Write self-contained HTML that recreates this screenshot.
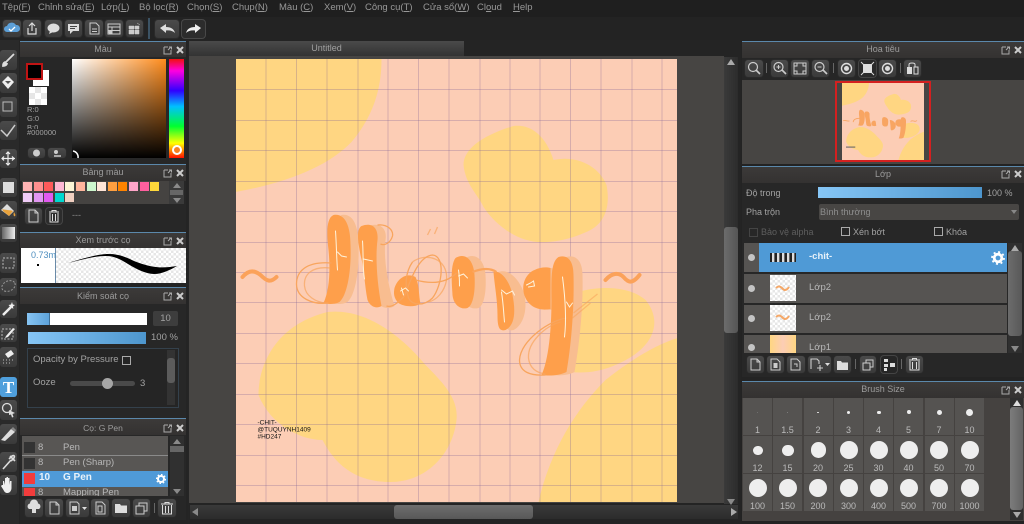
<!DOCTYPE html>
<html lang="vi">
<head>
<meta charset="utf-8">
<title>MediBang Paint</title>
<style>
html,body{margin:0;padding:0;width:1024px;height:524px;overflow:hidden;background:#252525}
body{position:relative;font-family:"Liberation Sans","Noto Sans CJK SC",sans-serif;color:#a2a2a2;filter:blur(.35px)}
.a,.t,.b,.title,.c,.pl,.sw,.bs{position:absolute}
.t{white-space:nowrap;font-size:9px;line-height:10px}
.t u{text-decoration:underline}
.m{color:#989898;font-size:9.5px;top:3px}
.b{background:linear-gradient(#4a4a4a,#3a3a3a);border-radius:3px;box-shadow:0 0 0 1px #2a2a2a}
.b svg,.title svg{position:absolute;left:0;top:0}
.title{background:linear-gradient(#3c3a39,#343231);border-top:1px solid #5b88ab;height:15px;text-align:center;font-size:9px;line-height:15px;color:#9c9c9c}
.c{background:#272727}
.sw{height:9px;width:9px;top:182px}
.ck2{background:repeating-conic-gradient(#e6e6e6 0 25%,#fff 0 50%) 0 0/5px 5px}
.pl{left:22px;width:146px;background:#585654;border-bottom:1px solid #8a8a8a;height:15px;color:#b8b8b8;font-size:9.5px;line-height:15px}
.bs{width:29px;height:37px;background:#555351}
.bs i{position:absolute;background:#eee;border-radius:50%}
.bs span{position:absolute;left:0;width:100%;top:27px;text-align:center;font-size:9px;line-height:10px;color:#bbb}
.ly{position:absolute;left:744px;width:263px;background:#565452;color:#b8b8b8;font-size:9.5px}
.cb{position:absolute;width:7px;height:7px;border:1px solid #aaa}
</style>
</head>
<body>

<!-- menu -->
<div class="a" style="left:0;top:0;width:1024px;height:17px;background:#1f1f1f"></div>
<span class="t m" style="left:2px">Tệp(<u>F</u>)</span>
<span class="t m" style="left:38px">Chỉnh sửa(<u>E</u>)</span>
<span class="t m" style="left:101px">Lớp(<u>L</u>)</span>
<span class="t m" style="left:139px">Bộ lọc(<u>R</u>)</span>
<span class="t m" style="left:187px">Chọn(<u>S</u>)</span>
<span class="t m" style="left:232px">Chụp(<u>N</u>)</span>
<span class="t m" style="left:279px">Màu (<u>C</u>)</span>
<span class="t m" style="left:324px">Xem(<u>V</u>)</span>
<span class="t m" style="left:365px">Công cụ(<u>T</u>)</span>
<span class="t m" style="left:423px">Cửa sổ(<u>W</u>)</span>
<span class="t m" style="left:477px">Cl<u>o</u>ud</span>
<span class="t m" style="left:513px"><u>H</u>elp</span>

<!-- toolbar -->
<div class="a" style="left:0;top:17px;width:1024px;height:23px;background:#232323"></div>
<div class="b" style="left:3px;top:20px;width:18px;height:17px"><svg width="18" height="17"><path d="M4 12a3 3 0 0 1 0-6 5 5 0 0 1 9-1 3.500 3.500 0 0 1 1 7z" fill="#5da0d8"/><path d="M6 9l2 2 4-4" stroke="#fff" fill="none" stroke-width="1.300"/></svg></div>
<div class="b" style="left:23px;top:20px;width:18px;height:17px"><svg width="18" height="17"><path d="M5 8v6h8V8M9 11V3M6 6l3-3 3 3" stroke="#ddd" fill="none" stroke-width="1.200"/></svg></div>
<div class="b" style="left:45px;top:20px;width:17px;height:17px"><svg width="17" height="17"><ellipse cx="8.500" cy="8" rx="6" ry="4.500" fill="#ddd"/><path d="M5 11l-1 3 4-2z" fill="#ddd"/></svg></div>
<div class="b" style="left:65px;top:20px;width:17px;height:17px"><svg width="17" height="17"><path d="M3 4h11v7H8l-3 3v-3H3z" fill="#ddd"/><path d="M5 6.500h7M5 8.500h5" stroke="#444"/></svg></div>
<div class="b" style="left:85px;top:20px;width:18px;height:17px"><svg width="18" height="17"><path d="M5 3h6l3 3v8H5zM7 9h5M7 11.500h5" stroke="#ccc" fill="none"/></svg></div>
<div class="b" style="left:105px;top:20px;width:18px;height:17px"><svg width="18" height="17"><path d="M3 4h12v10H3zM3 7h12M3 10.500h12M7 7v7" stroke="#ccc" fill="none"/><circle cx="5.500" cy="12" r="2" fill="#ccc"/></svg></div>
<div class="b" style="left:126px;top:20px;width:17px;height:17px"><svg width="17" height="17"><path d="M3 6h5v3H3zM9 6h4v3H9zM3 10h5v4H3zM9 10h4v4H9zM11 3l3 2" fill="#ccc" stroke="#ccc" stroke-width=".500"/></svg></div>
<div class="a" style="left:148px;top:18px;width:2px;height:21px;background:#3c5364"></div>
<div class="b" style="left:155px;top:20px;width:24px;height:18px"><svg width="24" height="18"><path d="M5 8l6-4v3c5 0 8 2 9 6-2-2-5-3-9-2.500V13z" fill="#ddd"/></svg></div>
<div class="b" style="left:182px;top:20px;width:23px;height:18px;background:#2c2c2c;box-shadow:0 0 0 1px #484848"><svg width="23" height="18"><path d="M19 8l-6-4v3C8 7 5 9 4 13c2-2 5-3 9-2.500V13z" fill="#eee"/></svg></div>

<!-- left tool strip -->
<div class="a" style="left:0;top:40px;width:19px;height:484px;background:#2a2a2a"></div>
<div class="b" style="left:0;top:50px;width:17px;height:20px"><svg width="17" height="20"><path d="M14 4L6 12M6 12c-2 0-3 1-3 4 2 0 4-1 4-3" stroke="#ddd" stroke-width="1.800" fill="#ddd"/></svg></div>
<div class="b" style="left:0;top:73px;width:17px;height:20px"><svg width="17" height="20"><path d="M8 3l6 6-6 7-6-7z" fill="#eee"/><path d="M5 8h6l-3 3z" fill="#555"/></svg></div>
<div class="b" style="left:0;top:97px;width:17px;height:20px"><svg width="17" height="20"><rect x="3" y="5" width="9" height="9" fill="none" stroke="#bbb"/></svg></div>
<div class="b" style="left:0;top:121px;width:17px;height:19px"><svg width="17" height="19"><path d="M1 9l6 6 8-11" stroke="#ccc" stroke-width="1.500" fill="none"/></svg></div>
<div class="b" style="left:0;top:149px;width:17px;height:19px"><svg width="17" height="19"><path d="M8 3v13M2 9.500h13M6 5l2-2 2 2M6 14l2 2 2-2M4 7.500l-2 2 2 2M12 7.500l2 2-2 2" stroke="#eee" stroke-width="1.200" fill="none"/></svg></div>
<div class="b" style="left:0;top:178px;width:17px;height:19px"><svg width="17" height="19"><rect x="3" y="4" width="11" height="11" fill="#ddd"/></svg></div>
<div class="b" style="left:0;top:201px;width:17px;height:18px"><svg width="17" height="18"><path d="M1 9l6-6 7 7-5 5z" fill="#ddd"/><path d="M14 11c1 2 2 3 1 4s-2-1-1-4z" fill="#e8a23c"/><path d="M2 8c2 1 9 1 11 2l-4 5-6-5z" fill="#e8a23c"/></svg></div>
<div class="b" style="left:0;top:224px;width:17px;height:18px"><div class="a" style="left:2px;top:3px;width:13px;height:12px;background:linear-gradient(90deg,#666,#eee)"></div></div>
<div class="b" style="left:0;top:253px;width:17px;height:20px"><svg width="17" height="20"><rect x="3" y="5" width="11" height="10" fill="none" stroke="#bbb" stroke-dasharray="2 1.500"/></svg></div>
<div class="b" style="left:0;top:278px;width:17px;height:18px"><svg width="17" height="18"><ellipse cx="8.500" cy="8" rx="7" ry="5" fill="none" stroke="#999" stroke-dasharray="2 1.500" transform="rotate(-25 8.500 8)"/></svg></div>
<div class="b" style="left:0;top:300px;width:17px;height:18px"><svg width="17" height="18"><path d="M3 15L11 7" stroke="#eee" stroke-width="2.500"/><path d="M12 2l.8 2.500L15 5l-2 1.500.3 2.500-1.800-1.500L9.500 9l.5-2.500L8.500 5l2.500-.5z" fill="#eee"/></svg></div>
<div class="b" style="left:0;top:324px;width:17px;height:18px"><svg width="17" height="18"><rect x="2" y="5" width="11" height="10" fill="none" stroke="#bbb" stroke-dasharray="2 1.500"/><path d="M6 12l7-8 2 1-7 8-3 1z" fill="#eee"/></svg></div>
<div class="b" style="left:0;top:347px;width:17px;height:20px"><svg width="17" height="20"><path d="M5 7l6-4 3 4-6 4z" fill="#eee"/><path d="M3 13h1M6 13h1M9 13h1M12 13h1M3 16h1M6 16h1M9 16h1" stroke="#bbb"/></svg></div>
<div class="b" style="left:0;top:377px;width:17px;height:20px;background:#4f9fdc"><span class="t" style="left:0;width:17px;text-align:center;top:2px;font:bold 17px/17px 'Liberation Serif',serif;color:#fff">T</span></div>
<div class="b" style="left:0;top:400px;width:17px;height:20px"><svg width="17" height="20"><circle cx="7" cy="8" r="4.500" fill="none" stroke="#ddd" stroke-width="1.300"/><path d="M9 10l6 3-2.500 1 1 3-1.500.5-1-3L9 15z" fill="#ddd"/></svg></div>
<div class="b" style="left:0;top:424px;width:17px;height:20px"><svg width="17" height="20"><path d="M1 16L11 5l4 3-10 9z" fill="#ddd"/><path d="M11 5l2-2 3 3-1 2z" fill="#888"/></svg></div>
<div class="b" style="left:0;top:452px;width:17px;height:20px"><svg width="17" height="20"><path d="M3 17L11 8M10 4l5 5M9 7l3-3c2-1 3 0 2 2l-3 3" stroke="#ddd" stroke-width="1.600" fill="none"/></svg></div>
<div class="b" style="left:0;top:475px;width:17px;height:20px"><svg width="17" height="20"><path d="M3 10V6l1 0 1 4V3h1.500v6V2H8v7V3h1.500v7l.5-4h1.500v7c0 3-2 5-4 5s-3-1-4-3L1 11l1-1z" fill="#eee"/></svg></div>

<!-- Left panels -->
<div class="a" style="left:19px;top:40px;width:169px;height:484px;background:#242424"></div>

<!-- Color -->
<div class="c" style="left:20px;top:56px;width:166px;height:108px"></div>
<div class="title" style="left:20px;top:41px;width:166px">Màu</div>
<svg class="a" style="left:162px;top:45px" width="24" height="10"><path d="M2 2h4M2 2v7h7V5M6 5l3-3M7 2h2.500v2.500" stroke="#aaa" fill="none"/><path d="M15 2l6 6M21 2l-6 6" stroke="#ccc" stroke-width="2"/></svg>
<div class="a" style="left:33px;top:70px;width:16px;height:16px;background:#fff"></div>
<div class="a" style="left:26px;top:63px;width:13px;height:13px;background:#000;border:2px solid #c01414"></div>
<div class="a ck2" style="left:29px;top:87px;width:18px;height:18px;background-size:12px 12px"></div>
<span class="t" style="left:27px;top:105px;font-size:7.5px">R:0</span>
<span class="t" style="left:27px;top:114px;font-size:7.5px">G:0</span>
<div class="a" style="left:27px;top:123px;height:6px;width:30px;overflow:hidden"><span class="t" style="left:0;top:0;font-size:7.5px">B:0</span></div>
<span class="t" style="left:27px;top:128px;font-size:7.5px">#000000</span>
<div class="b" style="left:28px;top:148px;width:17px;height:10px"><svg width="17" height="10"><circle cx="8.500" cy="5" r="3.500" fill="#ccc"/></svg></div>
<div class="b" style="left:48px;top:148px;width:18px;height:10px"><svg width="18" height="10"><circle cx="8" cy="4" r="2" fill="#ccc"/><path d="M6 8h7" stroke="#ccc" stroke-width="1.500"/></svg></div>
<div class="a" style="left:72px;top:59px;width:94px;height:99px;background:linear-gradient(rgba(0,0,0,0),#000),linear-gradient(90deg,#fff,#ff8c1c)"></div>
<svg class="a" style="left:72px;top:150px" width="10" height="9"><path d="M1 1a6 6 0 0 1 5 7" stroke="#fff" stroke-width="1.500" fill="none"/></svg>
<div class="a" style="left:169px;top:59px;width:15px;height:99px;background:linear-gradient(#f01010,#ff00e0 12%,#3000ff 32%,#00c0ff 48%,#00ff30 68%,#ffff00 85%,#ff1000 100%)"></div>
<div class="a" style="left:171.500px;top:145px;width:6px;height:6px;border:2.500px solid #fff;border-radius:50%;background:#f88020"></div>

<!-- Palette -->
<div class="c" style="left:20px;top:180px;width:166px;height:52px"></div>
<div class="title" style="left:20px;top:164px;width:166px;height:16px">Bảng màu</div>
<svg class="a" style="left:162px;top:168px" width="24" height="10"><path d="M2 2h4M2 2v7h7V5M6 5l3-3M7 2h2.500v2.500" stroke="#aaa" fill="none"/><path d="M15 2l6 6M21 2l-6 6" stroke="#ccc" stroke-width="2"/></svg>
<div class="a" style="left:22px;top:181px;width:147px;height:23px;background:#454341"></div>
<div class="sw" style="left:23px;background:#ffb3b3"></div>
<div class="sw" style="left:33.500px;background:#ff8f8f"></div>
<div class="sw" style="left:44px;background:#ff5a5a"></div>
<div class="sw" style="left:54.500px;background:#ffb9d4"></div>
<div class="sw" style="left:65px;background:#fdf5d5"></div>
<div class="sw" style="left:75.500px;background:#ffb59c"></div>
<div class="sw" style="left:86.500px;background:#cdf7cd"></div>
<div class="sw" style="left:97px;background:#ffe6d8"></div>
<div class="sw" style="left:108px;background:#ffa040"></div>
<div class="sw" style="left:118px;background:#ff8400"></div>
<div class="sw" style="left:129px;background:#ffa6c9"></div>
<div class="sw" style="left:139.500px;background:#ff5f9e"></div>
<div class="sw" style="left:150px;background:#ffd83a"></div>
<div class="sw" style="left:23px;top:193px;background:#f0ccf8"></div>
<div class="sw" style="left:33.500px;top:193px;background:#e296f2"></div>
<div class="sw" style="left:44px;top:193px;background:#e25af0"></div>
<div class="sw" style="left:54.500px;top:193px;background:#00d8d0"></div>
<div class="sw" style="left:65px;top:193px;background:#f0cfc0"></div>
<div class="a" style="left:169px;top:181px;width:15px;height:23px;background:#3a3a3a"></div>
<div class="a" style="left:170px;top:190px;width:13px;height:5px;background:#666"></div>
<svg class="a" style="left:172px;top:182px" width="10" height="22"><path d="M1 6l4-5 4 5z" fill="#8a8a8a"/><path d="M1 16l4 5 4-5z" fill="#8a8a8a"/></svg>
<div class="b" style="left:25px;top:208px;width:17px;height:16px"><svg width="17" height="16"><path d="M4 2h6l3 3v9H4zM10 2v3h3" stroke="#ccc" fill="none"/></svg></div>
<div class="b" style="left:46px;top:208px;width:16px;height:16px;background:#2c2c2c;box-shadow:0 0 0 1px #454545"><svg width="16" height="16"><path d="M3 4h10M6 4V2.500h4V4M4 5v9h8V5M6.500 6v7M9.500 6v7" stroke="#ddd" fill="none"/></svg></div>
<span class="t" style="left:72px;top:210px;color:#8a8a8a">---</span>

<!-- Brush preview -->
<div class="title" style="left:20px;top:232px;width:166px;height:15px">Xem trước cọ</div>
<svg class="a" style="left:162px;top:236px" width="24" height="10"><path d="M2 2h4M2 2v7h7V5M6 5l3-3M7 2h2.500v2.500" stroke="#aaa" fill="none"/><path d="M15 2l6 6M21 2l-6 6" stroke="#ccc" stroke-width="2"/></svg>
<div class="a" style="left:21px;top:248px;width:34px;height:35px;background:#fff"></div>
<div class="a" style="left:55px;top:248px;width:1px;height:35px;background:#6a8aa8"></div>
<div class="a ck2" style="left:56px;top:248px;width:130px;height:35px"></div>
<div class="a" style="left:21px;top:248px;width:35px;height:13px;overflow:hidden"><span class="t" style="left:10px;top:2px;color:#4f8fbf;font-size:9px">0.73mm</span></div>
<div class="a" style="left:37px;top:264px;width:2px;height:2px;background:#000"></div>
<svg class="a" style="left:56px;top:248px" width="130" height="35"><path d="M12 15C25 11 40 6.500 51 6 62 5.500 70 9 78 13 86 16 92 18 100 19 108 20 114 19 121 18 114 22 106 26 98 26 90 26 80 21 72 16 64 11 58 8 50 8 38 8 25 12 12 15Z" fill="#000"/></svg>

<!-- Brush control -->
<div class="c" style="left:20px;top:303px;width:166px;height:115px"></div>
<div class="title" style="left:20px;top:287px;width:166px;height:16px;line-height:17px">Kiểm soát cọ</div>
<svg class="a" style="left:162px;top:291px" width="24" height="10"><path d="M2 2h4M2 2v7h7V5M6 5l3-3M7 2h2.500v2.500" stroke="#aaa" fill="none"/><path d="M15 2l6 6M21 2l-6 6" stroke="#ccc" stroke-width="2"/></svg>
<div class="a" style="left:27px;top:313px;width:120px;height:12px;background:#fff"></div>
<div class="a" style="left:27px;top:313px;width:22px;height:12px;background:linear-gradient(90deg,#86c4f3,#5ea3da);border-right:1px solid #3f6f96"></div>
<div class="a" style="left:153px;top:311px;width:25px;height:15px;background:#3d3d3d;border-radius:2px"></div>
<span class="t" style="left:153px;width:25px;text-align:center;top:314px;font-size:9.500px">10</span>
<div class="a" style="left:28px;top:332px;width:118px;height:12px;background:linear-gradient(90deg,#86c6f6,#4d96ce)"></div>
<span class="t" style="left:151px;top:333px;font-size:9.500px">100 %</span>
<div class="a" style="left:27px;top:348px;width:150px;height:58px;border:1px solid #34414c;background:#252525"></div>
<span class="t" style="left:33px;top:355px;font-size:9.500px">Opacity by Pressure</span>
<div class="cb" style="left:122px;top:356px"></div>
<span class="t" style="left:33px;top:378px;font-size:9.500px">Ooze</span>
<div class="a" style="left:70px;top:381px;width:65px;height:5px;border-radius:3px;background:#4a4a4a"></div>
<div class="a" style="left:102px;top:378px;width:11px;height:11px;border-radius:50%;background:#a6a6a6"></div>
<span class="t" style="left:140px;top:379px;font-size:9.500px">3</span>
<div class="a" style="left:167px;top:350px;width:8px;height:55px;background:#333"></div>
<div class="a" style="left:167px;top:358px;width:8px;height:25px;border-radius:3px;background:#5c5c5c"></div>

<!-- Brush list -->
<div class="c" style="left:20px;top:434px;width:166px;height:86px"></div>
<div class="title" style="left:20px;top:418px;width:166px;height:16px;line-height:18px;font-size:8.500px">Cọ: G Pen</div>
<svg class="a" style="left:162px;top:423px" width="24" height="10"><path d="M2 2h4M2 2v7h7V5M6 5l3-3M7 2h2.500v2.500" stroke="#aaa" fill="none"/><path d="M15 2l6 6M21 2l-6 6" stroke="#ccc" stroke-width="2"/></svg>
<div class="a" style="left:22px;top:436px;width:146px;height:60px;overflow:hidden;background:#585654"></div>
<div class="pl" style="top:440px"></div><div class="a" style="left:24px;top:442px;width:11px;height:11px;background:#333"></div><span class="t" style="left:38px;top:443px;font-size:9.500px;color:#b8b8b8">8</span><span class="t" style="left:63px;top:443px;font-size:9.500px;color:#b8b8b8">Pen</span>
<div class="pl" style="top:456px"></div><div class="a" style="left:24px;top:458px;width:11px;height:11px;background:#333"></div><span class="t" style="left:38px;top:458px;font-size:9.500px;color:#b8b8b8">8</span><span class="t" style="left:63px;top:458px;font-size:9.500px;color:#b8b8b8">Pen (Sharp)</span>
<div class="a" style="left:22px;top:471px;width:146px;height:16px;background:#4f9ad8"></div>
<div class="a" style="left:24px;top:473px;width:11px;height:11px;background:#f23c3c"></div>
<span class="t" style="left:39px;top:473px;font-size:10px;font-weight:bold;color:#e8f2fa">10</span>
<span class="t" style="left:63px;top:473px;font-size:10px;font-weight:bold;color:#e8f2fa">G Pen</span>
<svg class="a" style="left:156px;top:474px" width="10" height="10"><circle cx="5" cy="5" r="3" fill="none" stroke="#fff" stroke-width="2"/><circle cx="5" cy="5" r="4.500" fill="none" stroke="#fff" stroke-width="1.300" stroke-dasharray="1.500 2"/></svg>
<div class="a" style="left:24px;top:488px;width:11px;height:8px;background:#f23c3c"></div>
<div class="a" style="left:22px;top:487px;width:146px;height:9px;overflow:hidden"><span class="t" style="left:16px;top:1px;font-size:9.500px;color:#b8b8b8">8</span><span class="t" style="left:41px;top:1px;font-size:9.500px;color:#b8b8b8">Mapping Pen</span></div>
<div class="a" style="left:170px;top:436px;width:14px;height:60px;background:#303030"></div>
<div class="a" style="left:170px;top:446px;width:14px;height:6px;background:#666"></div>
<svg class="a" style="left:172px;top:437px" width="10" height="58"><path d="M1 7l4-5 4 5z" fill="#8a8a8a"/><path d="M1 52l4 5 4-5z" fill="#8a8a8a"/></svg>
<div class="b" style="left:25px;top:499px;width:18px;height:18px"><svg width="18" height="18"><path d="M4 10a3 3 0 0 1 1-5.500 4 4 0 0 1 8 0A3 3 0 0 1 14 10H11v4H7v-4z" fill="#ddd"/></svg></div>
<div class="b" style="left:45px;top:499px;width:18px;height:18px"><svg width="18" height="18"><path d="M5 3h6l3 3v9H5zM11 3v3h3" stroke="#ccc" fill="none"/></svg></div>
<div class="b" style="left:66px;top:499px;width:23px;height:18px"><svg width="23" height="18"><path d="M4 3h7l2 2v10H4z" stroke="#ccc" fill="none"/><rect x="6" y="7" width="5" height="5" fill="#ccc"/><path d="M16 8h5l-2.500 3z" fill="#ddd"/></svg></div>
<div class="b" style="left:91px;top:499px;width:18px;height:18px"><svg width="18" height="18"><path d="M5 3h6l3 3v9H5z" stroke="#ccc" fill="none"/><rect x="7" y="7" width="4" height="6" fill="none" stroke="#ccc"/></svg></div>
<div class="b" style="left:112px;top:499px;width:18px;height:18px"><svg width="18" height="18"><path d="M3 5h5l1 1.500h6V14H3z" fill="#ddd"/></svg></div>
<div class="b" style="left:133px;top:499px;width:17px;height:18px"><svg width="17" height="18"><path d="M3 7h8v8H3zM6 7V4h8v8h-3" stroke="#ccc" fill="none"/></svg></div>
<div class="a" style="left:154px;top:503px;width:1px;height:10px;background:#666"></div>
<div class="b" style="left:158px;top:499px;width:18px;height:18px"><svg width="18" height="18"><path d="M3 5h12M7 5V3.500h4V5M4.500 6v9h9V6M7.500 7v7M10.500 7v7" stroke="#ddd" fill="none"/></svg></div>

<!-- Centre -->
<div class="a" style="left:189px;top:40px;width:552px;height:484px;background:#242424"></div>
<div class="a" style="left:189px;top:41px;width:275px;height:15px;background:linear-gradient(#4a4a4a,#333);text-align:center;font-size:9px;line-height:15px;color:#a0a0a0">Untitled</div>
<div class="a" style="left:189px;top:56px;width:535px;height:447px;background:#474543"></div>

<svg class="a" style="left:235.500px;top:59px" width="441.500" height="443" viewBox="235.500 59 441.500 443">
<title>Hồng</title>
<rect x="235" y="59" width="443" height="443" fill="#fccdb5"/>
<g fill="#ffd682">
<path d="M235 59H381C381 92 371 118 351 142 329 165 290 182 235 192Z"/>
<path d="M463 165C463 150 480 136 513 126 530 124 545 135 553 160 575 155 598 165 606 185 610 205 605 222 590 230 570 240 550 243 537 242 515 240 495 225 483 207 478 195 465 185 463 165Z"/>
<path d="M258 395C258 365 275 325 327 312 365 308 400 335 425 365 445 385 458 400 456 420 452 455 425 482 390 482 355 482 335 465 322 440 300 440 270 425 258 395Z"/>
<path d="M560 300C580 286 625 282 645 300 660 318 656 340 632 356 610 370 590 374 570 372 550 372 545 330 560 300Z"/>
<path d="M538 502C550 450 575 410 605 380 630 360 655 345 677 338V502Z"/>
</g>
<g stroke="#7d5f96" stroke-opacity=".3" stroke-width="1">
<path d="M265.500 59v443M296 59v443M326.500 59v443M357.500 59v443M387.500 59v443M418 59v443M448.500 59v443M479.500 59v443M509.500 59v443M539.500 59v443M570 59v443M600.500 59v443M631.500 59v443M661.500 59v443"/>
<path d="M235 89.500h443M235 120.500h443M235 150.500h443M235 181.500h443M235 211.500h443M235 242.500h443M235 272.500h443M235 302.500h443M235 333.500h443M235 363.500h443M235 394.500h443M235 424.500h443M235 455.500h443M235 485.500h443"/>
</g>
<g fill="#f8bd90">
<path d="M341 215C352 213 358 225 358 245 359 270 355 295 347 302 341 305 334 304 331 303 337 290 338 270 336 250 334 232 334 218 341 215Z"/>
<path d="M368 226C379 222 387 228 385 240 383 255 386 280 394 306 388 310 379 308 375 300 371 285 371 270 367 255 364 240 363 229 368 226Z"/>
<path d="M465 258C475 252 484 260 485 275 486 290 484 305 478 308 470 310 463 305 462 295 461 280 460 265 465 258Z"/>
<path d="M498 272C508 268 520 280 524 295 527 310 523 325 513 330 506 332 503 325 503 315 503 300 500 285 498 272Z"/>
<path d="M536 270C546 266 556 268 560 272V308C550 312 536 310 530 300Z"/>
<path d="M566 257C576 254 582 262 582 275 583 310 578 350 574 372 566 376 556 376 548 374 556 360 558 330 558 300 558 280 558 262 566 257Z"/>
</g>
<g fill="#fe9f4b">
<path d="M333 215C344 213 350 225 350 245 351 270 347 295 339 302 333 305 326 304 323 303 329 290 330 270 328 250 326 232 326 218 333 215Z"/>
<path d="M361 226C372 222 378 228 377 240 375 255 376 280 381 306 376 309 370 307 367 300 364 285 364 270 360 255 357 240 356 229 361 226Z"/>
<path d="M394 288C398 276 408 273 415 277 419 285 418 295 420 304 412 308 402 306 398 303 393 298 393 293 394 288Z"/>
<path d="M455 258C465 252 473 260 474 275 475 290 473 305 467 308 460 310 453 305 452 295 451 280 450 265 455 258Z"/>
<path d="M493 272C500 270 509 280 512 295 515 310 515 325 505 330 498 332 497 325 497 315 497 300 494 285 493 272Z"/>
<path d="M534 270C540 267 546 267 550 268L550 309C540 311 530 308 525 298 519 285 526 273 534 270Z"/>
<path d="M558 257C568 254 573 262 573 275 574 310 570 350 566 372 558 376 548 376 541 375 548 360 551 330 551 300 551 280 550 262 558 257Z"/>
</g>
<g fill="none" stroke="#f8a55e" stroke-width="1.300">
<path d="M331 263C305 261 296 272 296 284 296 298 312 305 328 303"/>
<path d="M330 268C312 266 303 274 304 286 305 296 315 302 325 303" stroke-opacity=".7"/>
<path d="M377 225C387 224 393 230 392 236 390 243 384 246 380 244"/>
<path d="M386 306C392 308 398 302 404 296 410 280 418 256 432 255 445 256 442 285 432 298 424 306 412 306 408 298 404 285 405 272 412 262"/>
<path d="M415 280C430 284 445 284 456 273" />
<path d="M412 262C425 252 448 258 446 280 444 292 436 300 428 302" stroke-opacity=".7"/>
<path d="M472 272C482 268 490 268 496 272" stroke-width="2.200" stroke="#fba55c"/>
<path d="M566 318C550 320 520 340 519 360 519 372 530 376 545 375"/>
<path d="M560 322C545 326 527 342 528 358 529 368 536 373 545 374" stroke-opacity=".7"/>
<path d="M573 313L597 294M572 318L590 303" stroke-opacity=".6"/>
<path d="M427 235L430 229M434 234L437 227" stroke-opacity=".7"/>
</g>
<g fill="none" stroke="#fba25a" stroke-width="4" stroke-linecap="round">
<path d="M242 277C248 270 254 270 260 275 266 281 270 283 276 277"/>
<path d="M605 280C611 273 618 272 623 277 628 283 632 284 639 275"/>
</g>
<g fill="none" stroke="#fff3dc" stroke-width="1" stroke-linecap="round">
<path d="M335 231C336 245 336 258 337 270M337 252L341 256 346 257"/>
<path d="M362 241C363 254 362 268 364 279M363 259L372 261"/>
<path d="M401 288L403 295M400 291L405 288 408 291"/>
<path d="M458 270C459 276 459 282 459 286M458 276L463 274 467 278"/>
<path d="M501 292C503 305 503 312 504 322M501 290L506 294 512 291 514 295"/>
<path d="M526 285L530 283 533 281 534 286 528 287"/>
<path d="M562 277C565 300 566 320 564 337M566 302L569 307 572 303"/>
</g>
<text font-family="Liberation Sans,sans-serif" font-size="6.500" fill="#111"><tspan x="257" y="424.500">-CHIT-</tspan><tspan x="257" y="431.500">@TUQUYNH1409</tspan><tspan x="257" y="438.500">#HD247</tspan></text>
</svg>

<!-- centre scrollbars -->
<div class="a" style="left:724px;top:57px;width:14px;height:447px;background:linear-gradient(90deg,#3a3a3a,#2c2c2c)"></div>
<div class="a" style="left:724px;top:227px;width:14px;height:106px;border-radius:3px;background:linear-gradient(90deg,#6c6c6c,#555)"></div>
<svg class="a" style="left:726px;top:58px" width="10" height="8"><path d="M1 7l4-6 4 6z" fill="#aaa"/></svg>
<svg class="a" style="left:726px;top:498px" width="10" height="8"><path d="M1 1l4 6 4-6z" fill="#8a8a8a"/></svg>
<div class="a" style="left:190px;top:505px;width:548px;height:14px;background:linear-gradient(#3a3a3a,#2c2c2c)"></div>
<div class="a" style="left:394px;top:505px;width:139px;height:14px;border-radius:3px;background:linear-gradient(#6e6e6e,#585858)"></div>
<svg class="a" style="left:191px;top:507px" width="8" height="10"><path d="M7 1L1 5l6 4z" fill="#8a8a8a"/></svg>
<svg class="a" style="left:730px;top:507px" width="8" height="10"><path d="M1 1l6 4-6 4z" fill="#aaa"/></svg>

<!-- Right panels -->
<div class="a" style="left:741px;top:40px;width:283px;height:484px;background:#232323"></div>

<!-- Navigator -->
<div class="title" style="left:742px;top:41px;width:282px;height:16px">Hoa tiêu</div>
<svg class="a" style="left:1000px;top:45px" width="24" height="10"><path d="M2 2h4M2 2v7h7V5M6 5l3-3M7 2h2.500v2.500" stroke="#aaa" fill="none"/><path d="M15 2l6 6M21 2l-6 6" stroke="#ccc" stroke-width="2"/></svg>
<div class="a" style="left:742px;top:58px;width:282px;height:22px;background:#262626"></div>
<div class="b" style="left:745px;top:60px;width:18px;height:17px"><svg width="18" height="17"><circle cx="8" cy="7" r="4.500" fill="none" stroke="#ccc" stroke-width="1.200"/><path d="M11 10l4 4" stroke="#ccc" stroke-width="1.600"/></svg></div>
<div class="a" style="left:766px;top:63px;width:1px;height:10px;background:#666"></div>
<div class="b" style="left:771px;top:60px;width:17px;height:17px"><svg width="17" height="17"><circle cx="7.500" cy="7" r="4.500" fill="none" stroke="#ccc" stroke-width="1.200"/><path d="M11 10l4 4" stroke="#ccc" stroke-width="1.600"/><path d="M5.500 7h4M7.500 5v4" stroke="#ccc"/></svg></div>
<div class="b" style="left:791px;top:60px;width:18px;height:17px"><svg width="18" height="17"><path d="M3 3h12v11H3zM6 3v3H3M12 3v3h3M6 14v-3H3M12 14v-3h3" stroke="#ccc" fill="none"/></svg></div>
<div class="b" style="left:812px;top:60px;width:17px;height:17px"><svg width="17" height="17"><circle cx="7.500" cy="7" r="4.500" fill="none" stroke="#ccc" stroke-width="1.200"/><path d="M11 10l4 4" stroke="#ccc" stroke-width="1.600"/><path d="M5.500 7h4" stroke="#ccc"/></svg></div>
<div class="a" style="left:833px;top:63px;width:1px;height:10px;background:#666"></div>
<div class="b" style="left:838px;top:60px;width:17px;height:17px"><svg width="17" height="17"><circle cx="8.500" cy="8.500" r="5" fill="none" stroke="#ddd" stroke-width="1.400"/><circle cx="8.500" cy="8.500" r="2.500" fill="#ddd"/></svg></div>
<div class="b" style="left:859px;top:60px;width:17px;height:17px;background:#2a2a2a;box-shadow:0 0 0 1px #444"><svg width="17" height="17"><rect x="4" y="4" width="9" height="9" fill="#ddd"/><path d="M2 2l3 3M15 2l-3 3M2 15l3-3M15 15l-3-3" stroke="#ddd"/></svg></div>
<div class="b" style="left:879px;top:60px;width:17px;height:17px"><svg width="17" height="17"><circle cx="8.500" cy="8.500" r="5" fill="none" stroke="#ddd" stroke-width="1.400"/><circle cx="8.500" cy="8.500" r="2.500" fill="#ddd"/></svg></div>
<div class="a" style="left:900px;top:63px;width:1px;height:10px;background:#666"></div>
<div class="b" style="left:904px;top:60px;width:17px;height:17px"><svg width="17" height="17"><path d="M3 7h5v7H3z" fill="#ddd"/><path d="M10 7h4v7h-4z" fill="none" stroke="#ddd"/><path d="M5 7V4.500C5 2.500 11 2.500 11 4.500V7" fill="none" stroke="#ddd"/></svg></div>
<div class="a" style="left:742px;top:80px;width:282px;height:84px;background:#474543"></div>
<svg class="a" style="left:842px;top:82px" width="82" height="79" viewBox="235.500 59 441.500 443" preserveAspectRatio="none">
<rect x="235" y="59" width="443" height="443" fill="#fccdb5"/>
<g fill="#ffd682">
<path d="M235 59H381C381 92 371 118 351 142 329 165 290 182 235 192Z"/>
<path d="M463 165C463 150 480 136 513 126 530 124 545 135 553 160 575 155 598 165 606 185 610 205 605 222 590 230 570 240 550 243 537 242 515 240 495 225 483 207 478 195 465 185 463 165Z"/>
<path d="M258 395C258 365 275 325 327 312 365 308 400 335 425 365 445 385 458 400 456 420 452 455 425 482 390 482 355 482 335 465 322 440 300 440 270 425 258 395Z"/>
<path d="M560 300C580 286 625 282 645 300 660 318 656 340 632 356 610 370 590 374 570 372 550 372 545 330 560 300Z"/>
<path d="M538 502C550 450 575 410 605 380 630 360 655 345 677 338V502Z"/>
</g>
<g fill="#f8a562">
<path d="M333 215C344 213 358 225 358 245 359 270 355 295 347 302 341 305 326 304 323 303 329 290 330 270 328 250 326 232 326 218 333 215Z"/>
<path d="M361 226C372 222 385 228 384 240 383 255 386 280 394 306 385 310 370 307 367 300 364 285 364 270 360 255 357 240 356 229 361 226Z"/>
<path d="M394 288C398 276 408 273 415 277 419 285 418 295 420 304 412 308 402 306 398 303 393 298 393 293 394 288Z"/>
<path d="M455 258C465 252 483 260 484 275 485 290 483 305 477 308 460 310 453 305 452 295 451 280 450 265 455 258Z"/>
<path d="M493 272C500 270 520 280 524 295 527 310 523 325 505 330 498 332 497 325 497 315 497 300 494 285 493 272Z"/>
<path d="M534 270C540 267 550 267 556 270L556 309C540 311 530 308 525 298 519 285 526 273 534 270Z"/>
<path d="M558 257C568 254 580 262 580 275 581 310 576 350 566 372 558 376 548 376 541 375 548 360 551 330 551 300 551 280 550 262 558 257Z"/>
</g>
<path d="M296 284C296 270 310 262 331 263M242 277C250 268 262 282 276 277M605 280C615 268 628 288 639 275" stroke="#f8a562" stroke-width="5" fill="none"/>
<path d="M257 424h50" stroke="#666" stroke-width="6"/>
</svg>
<div class="a" style="left:835px;top:81px;width:92px;height:77px;border:2px solid #d42020"></div>

<!-- Layer -->
<div class="c" style="left:742px;top:182px;width:282px;height:195px"></div>
<div class="title" style="left:742px;top:166px;width:282px;height:16px">Lớp</div>
<svg class="a" style="left:1000px;top:169px" width="24" height="10"><path d="M2 2h4M2 2v7h7V5M6 5l3-3M7 2h2.500v2.500" stroke="#aaa" fill="none"/><path d="M15 2l6 6M21 2l-6 6" stroke="#ccc" stroke-width="2"/></svg>
<span class="t" style="left:746px;top:188px">Độ trong</span>
<div class="a" style="left:818px;top:187px;width:164px;height:11px;background:linear-gradient(90deg,#86c6f6,#4d96ce)"></div>
<span class="t" style="left:987px;top:188px">100 %</span>
<span class="t" style="left:746px;top:207px">Pha trộn</span>
<div class="a" style="left:819px;top:204px;width:200px;height:16px;background:#484644;border-radius:2px"></div>
<span class="t" style="left:820px;top:207px;color:#8e8e8e">Bình thường</span>
<svg class="a" style="left:1010px;top:209px" width="8" height="6"><path d="M1 1h6L4 5z" fill="#888"/></svg>
<div class="cb" style="left:749px;top:228px;border-color:#444"></div>
<span class="t" style="left:761px;top:227px;color:#5e5e5e">Bảo vệ alpha</span>
<div class="cb" style="left:841px;top:227px"></div>
<span class="t" style="left:853px;top:227px">Xén bớt</span>
<div class="cb" style="left:934px;top:227px"></div>
<span class="t" style="left:946px;top:227px">Khóa</span>

<div class="ly" style="top:243px;height:29px"></div>
<div class="a" style="left:759px;top:243px;width:248px;height:29px;background:#4f9ad6"></div>
<div class="a" style="left:748px;top:254px;width:7px;height:7px;border-radius:50%;background:#c4c4c4"></div>
<div class="a" style="left:770px;top:253px;width:26px;height:9px;background:repeating-linear-gradient(90deg,#222 0 2px,#ddd 2px 4px,#666 4px 5px)"></div>
<span class="t" style="left:809px;top:252px;color:#e8f2fa;font-weight:bold;font-size:9.500px">-chit-</span>
<svg class="a" style="left:991px;top:251px" width="14" height="14"><circle cx="7" cy="7" r="3.800" fill="none" stroke="#fff" stroke-width="2.800"/><circle cx="7" cy="7" r="6" fill="none" stroke="#fff" stroke-width="1.800" stroke-dasharray="2 2.700"/></svg>

<div class="ly" style="top:274px;height:29px"></div>
<div class="a" style="left:748px;top:285px;width:7px;height:7px;border-radius:50%;background:#c4c4c4"></div>
<div class="a ck2" style="left:770px;top:275px;width:26px;height:26px"></div>
<svg class="a" style="left:770px;top:275px" width="26" height="26"><path d="M6 13c3-3 5-1 7 1s4 1 6-2" stroke="#f5a868" stroke-width="2" fill="none"/></svg>
<span class="t" style="left:809px;top:283px;color:#b8b8b8;font-size:9.500px">Lớp2</span>

<div class="ly" style="top:305px;height:28px"></div>
<div class="a" style="left:748px;top:315px;width:7px;height:7px;border-radius:50%;background:#c4c4c4"></div>
<div class="a ck2" style="left:770px;top:305px;width:26px;height:26px"></div>
<svg class="a" style="left:770px;top:305px" width="26" height="26"><path d="M6 12c3-3 5-1 7 1s4 1 6-2" stroke="#f5a868" stroke-width="2" fill="none"/></svg>
<span class="t" style="left:809px;top:313px;color:#b8b8b8;font-size:9.500px">Lớp2</span>

<div class="ly" style="top:335px;height:18px;overflow:hidden"></div>
<div class="a" style="left:748px;top:344px;width:7px;height:7px;border-radius:50%;background:#c4c4c4"></div>
<div class="a" style="left:770px;top:335px;width:26px;height:18px;background:linear-gradient(90deg,#ffd682,#fccdb5 50%,#ffd682)"></div>
<div class="a" style="left:809px;top:335px;width:40px;height:18px;overflow:hidden"><span class="t" style="left:0;top:8px;color:#b8b8b8;font-size:9.500px">Lớp1</span></div>

<div class="a" style="left:1008px;top:243px;width:14px;height:110px;background:#2f2f2f"></div>
<div class="a" style="left:1008px;top:251px;width:14px;height:85px;border-radius:3px;background:linear-gradient(90deg,#6c6c6c,#585858)"></div>
<svg class="a" style="left:1010px;top:244px" width="10" height="8"><path d="M1 7l4-6 4 6z" fill="#aaa"/></svg>
<svg class="a" style="left:1010px;top:345px" width="10" height="8"><path d="M1 1l4 6 4-6z" fill="#8a8a8a"/></svg>

<div class="b" style="left:747px;top:356px;width:17px;height:17px"><svg width="17" height="17"><path d="M4 3h6l3 3v8H4zM10 3v3h3" stroke="#ccc" fill="none"/></svg></div>
<div class="b" style="left:767px;top:356px;width:17px;height:17px"><svg width="17" height="17"><path d="M4 3h6l3 3v8H4z" stroke="#ccc" fill="none"/><rect x="6.500" y="7" width="4" height="5" fill="#ccc"/></svg></div>
<div class="b" style="left:787px;top:356px;width:18px;height:17px"><svg width="18" height="17"><path d="M4 3h6l3 3v8H4zM7 8h3v3" stroke="#ccc" fill="none"/></svg></div>
<div class="b" style="left:808px;top:356px;width:23px;height:17px"><svg width="23" height="17"><path d="M3 13V3h6l2 2v3M9 12h6M12 9v6" stroke="#ccc" fill="none" stroke-width="1.100"/><path d="M17 7h5l-2.500 3z" fill="#ddd"/></svg></div>
<div class="b" style="left:834px;top:356px;width:17px;height:17px"><svg width="17" height="17"><path d="M3 5h4l1 1.500h6V14H3z" fill="#ddd"/></svg></div>
<div class="a" style="left:855px;top:359px;width:1px;height:10px;background:#666"></div>
<div class="b" style="left:860px;top:356px;width:16px;height:17px"><svg width="16" height="17"><path d="M3 7h7v7H3zM6 7V4h7v7h-3" stroke="#ccc" fill="none"/></svg></div>
<div class="b" style="left:881px;top:356px;width:16px;height:17px;background:#262626;box-shadow:0 0 0 1px #444"><svg width="16" height="17"><path d="M3 3h4v3H3zM3 8h4v3H3zM3 12h3v3H3z" fill="#ddd"/><rect x="9" y="7" width="5" height="4" fill="#ddd"/></svg></div>
<div class="a" style="left:901px;top:359px;width:1px;height:10px;background:#666"></div>
<div class="b" style="left:906px;top:356px;width:17px;height:17px"><svg width="17" height="17"><path d="M3 4h11M6.500 4V2.500h4V4M4 5v9h9V5M6.500 6v7M10.500 6v7" stroke="#ddd" fill="none"/></svg></div>

<!-- Brush Size -->
<div class="a" style="left:742px;top:397px;width:282px;height:124px;background:#454240"></div>
<div class="title" style="left:742px;top:381px;width:282px;height:16px">Brush Size</div>
<svg class="a" style="left:1000px;top:385px" width="24" height="10"><path d="M2 2h4M2 2v7h7V5M6 5l3-3M7 2h2.500v2.500" stroke="#aaa" fill="none"/><path d="M15 2l6 6M21 2l-6 6" stroke="#ccc" stroke-width="2"/></svg>
<div class="a" style="left:1010px;top:398px;width:13px;height:122px;background:#2f2f2f"></div>
<div class="a" style="left:1010px;top:407px;width:13px;height:103px;border-radius:3px;background:linear-gradient(90deg,#7c7c7c,#646464)"></div>
<svg class="a" style="left:1012px;top:399px" width="10" height="8"><path d="M1 7l4-6 4 6z" fill="#ddd"/></svg>
<svg class="a" style="left:1012px;top:511px" width="10" height="8"><path d="M1 1l4 6 4-6z" fill="#aaa"/></svg>

<div class="bs" style="left:743px;top:398px"><i style="left:14px;top:13.500px;width:1px;height:1px;background:#777"></i><span>1</span></div>
<div class="bs" style="left:773px;top:398px"><i style="left:14px;top:13.500px;width:1px;height:1px;background:#888"></i><span>1.5</span></div>
<div class="bs" style="left:803.500px;top:398px"><i style="left:13.500px;top:13.500px;width:2px;height:1.500px"></i><span>2</span></div>
<div class="bs" style="left:834px;top:398px"><i style="left:13px;top:13px;width:3px;height:3px"></i><span>3</span></div>
<div class="bs" style="left:864px;top:398px"><i style="left:13px;top:12.500px;width:3.500px;height:3.500px"></i><span>4</span></div>
<div class="bs" style="left:894px;top:398px"><i style="left:12.500px;top:12px;width:4px;height:4px"></i><span>5</span></div>
<div class="bs" style="left:924.500px;top:398px"><i style="left:12px;top:11.500px;width:5px;height:5px"></i><span>7</span></div>
<div class="bs" style="left:955px;top:398px"><i style="left:11px;top:10.500px;width:7px;height:7px"></i><span>10</span></div>

<div class="bs" style="left:743px;top:436px"><i style="left:10px;top:9.500px;width:9.500px;height:9.500px"></i><span>12</span></div>
<div class="bs" style="left:773px;top:436px"><i style="left:9px;top:8.500px;width:11.500px;height:11.500px"></i><span>15</span></div>
<div class="bs" style="left:803.500px;top:436px"><i style="left:7px;top:6px;width:15.500px;height:15.500px"></i><span>20</span></div>
<div class="bs" style="left:834px;top:436px"><i style="left:5.500px;top:5px;width:18px;height:18px"></i><span>25</span></div>
<div class="bs" style="left:864px;top:436px"><i style="left:5.500px;top:5px;width:18px;height:18px"></i><span>30</span></div>
<div class="bs" style="left:894px;top:436px"><i style="left:5.500px;top:5px;width:18px;height:18px"></i><span>40</span></div>
<div class="bs" style="left:924.500px;top:436px"><i style="left:5.500px;top:5px;width:18px;height:18px"></i><span>50</span></div>
<div class="bs" style="left:955px;top:436px"><i style="left:5.500px;top:5px;width:18px;height:18px"></i><span>70</span></div>

<div class="bs" style="left:743px;top:474px"><i style="left:5.500px;top:5px;width:18px;height:18px"></i><span>100</span></div>
<div class="bs" style="left:773px;top:474px"><i style="left:5.500px;top:5px;width:18px;height:18px"></i><span>150</span></div>
<div class="bs" style="left:803.500px;top:474px"><i style="left:5.500px;top:5px;width:18px;height:18px"></i><span>200</span></div>
<div class="bs" style="left:834px;top:474px"><i style="left:5.500px;top:5px;width:18px;height:18px"></i><span>300</span></div>
<div class="bs" style="left:864px;top:474px"><i style="left:5.500px;top:5px;width:18px;height:18px"></i><span>400</span></div>
<div class="bs" style="left:894px;top:474px"><i style="left:5.500px;top:5px;width:18px;height:18px"></i><span>500</span></div>
<div class="bs" style="left:924.500px;top:474px"><i style="left:5.500px;top:5px;width:18px;height:18px"></i><span>700</span></div>
<div class="bs" style="left:955px;top:474px"><i style="left:5.500px;top:5px;width:18px;height:18px"></i><span>1000</span></div>

</body>
</html>
